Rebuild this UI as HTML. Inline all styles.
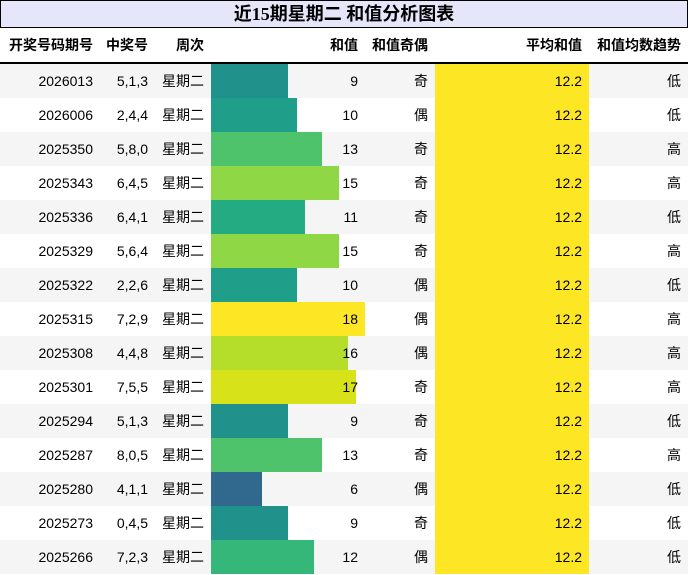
<!DOCTYPE html>
<html><head><meta charset="utf-8"><style>
body{margin:0;width:688px;height:575px;background:#fff;font-family:"Liberation Sans","Noto Sans CJK SC",sans-serif;font-size:14px;color:#000;overflow:hidden}
.title{position:absolute;left:0;top:0;width:686px;height:26px;background:#e6e6fa;border:1px solid #000;text-align:center;font-weight:bold;font-size:18px;line-height:27px;font-family:"Liberation Serif","Noto Sans CJK SC",sans-serif}
table{position:absolute;left:0;top:28px;border-collapse:collapse;width:688px;table-layout:fixed}
th{height:34px;font-weight:bold;text-align:right;padding:0 7px 0 0;border-bottom:2px solid #000;white-space:nowrap}
td{height:34px;padding:0 7px 0 0;text-align:right;white-space:nowrap}
tbody tr:nth-child(odd){background:#f5f5f5}
td.b{position:relative;padding:0}
td.b div{position:absolute;left:0;top:0;bottom:0}
td.b span{position:relative;padding-right:7px}
td.m{background:#fde725}
</style></head><body>
<div class="title">近15期星期二 和值分析图表</div>
<table>
<colgroup><col style="width:100px"><col style="width:55px"><col style="width:56px"><col style="width:154px"><col style="width:70px"><col style="width:154px"><col style="width:99px"></colgroup>
<thead><tr><th>开奖号码期号</th><th>中奖号</th><th>周次</th><th>和值</th><th>和值奇偶</th><th>平均和值</th><th>和值均数趋势</th></tr></thead>
<tbody>
<tr><td>2026013</td><td>5,1,3</td><td>星期二</td><td class="b"><div style="width:77px;background:#21918c"></div><span>9</span></td><td>奇</td><td class="m">12.2</td><td>低</td></tr>
<tr><td>2026006</td><td>2,4,4</td><td>星期二</td><td class="b"><div style="width:86px;background:#1f9e89"></div><span>10</span></td><td>偶</td><td class="m">12.2</td><td>低</td></tr>
<tr><td>2025350</td><td>5,8,0</td><td>星期二</td><td class="b"><div style="width:111px;background:#4ec36b"></div><span>13</span></td><td>奇</td><td class="m">12.2</td><td>高</td></tr>
<tr><td>2025343</td><td>6,4,5</td><td>星期二</td><td class="b"><div style="width:128px;background:#8fd744"></div><span>15</span></td><td>奇</td><td class="m">12.2</td><td>高</td></tr>
<tr><td>2025336</td><td>6,4,1</td><td>星期二</td><td class="b"><div style="width:94px;background:#25ab82"></div><span>11</span></td><td>奇</td><td class="m">12.2</td><td>低</td></tr>
<tr><td>2025329</td><td>5,6,4</td><td>星期二</td><td class="b"><div style="width:128px;background:#8fd744"></div><span>15</span></td><td>奇</td><td class="m">12.2</td><td>高</td></tr>
<tr><td>2025322</td><td>2,2,6</td><td>星期二</td><td class="b"><div style="width:86px;background:#1f9e89"></div><span>10</span></td><td>偶</td><td class="m">12.2</td><td>低</td></tr>
<tr><td>2025315</td><td>7,2,9</td><td>星期二</td><td class="b"><div style="width:154px;background:#fde725"></div><span>18</span></td><td>偶</td><td class="m">12.2</td><td>高</td></tr>
<tr><td>2025308</td><td>4,4,8</td><td>星期二</td><td class="b"><div style="width:137px;background:#b5de2b"></div><span>16</span></td><td>偶</td><td class="m">12.2</td><td>高</td></tr>
<tr><td>2025301</td><td>7,5,5</td><td>星期二</td><td class="b"><div style="width:145px;background:#d8e219"></div><span>17</span></td><td>奇</td><td class="m">12.2</td><td>高</td></tr>
<tr><td>2025294</td><td>5,1,3</td><td>星期二</td><td class="b"><div style="width:77px;background:#21918c"></div><span>9</span></td><td>奇</td><td class="m">12.2</td><td>低</td></tr>
<tr><td>2025287</td><td>8,0,5</td><td>星期二</td><td class="b"><div style="width:111px;background:#4ec36b"></div><span>13</span></td><td>奇</td><td class="m">12.2</td><td>高</td></tr>
<tr><td>2025280</td><td>4,1,1</td><td>星期二</td><td class="b"><div style="width:51px;background:#31688e"></div><span>6</span></td><td>偶</td><td class="m">12.2</td><td>低</td></tr>
<tr><td>2025273</td><td>0,4,5</td><td>星期二</td><td class="b"><div style="width:77px;background:#21918c"></div><span>9</span></td><td>奇</td><td class="m">12.2</td><td>低</td></tr>
<tr><td>2025266</td><td>7,2,3</td><td>星期二</td><td class="b"><div style="width:103px;background:#35b779"></div><span>12</span></td><td>偶</td><td class="m">12.2</td><td>低</td></tr>
</tbody></table>
</body></html>
